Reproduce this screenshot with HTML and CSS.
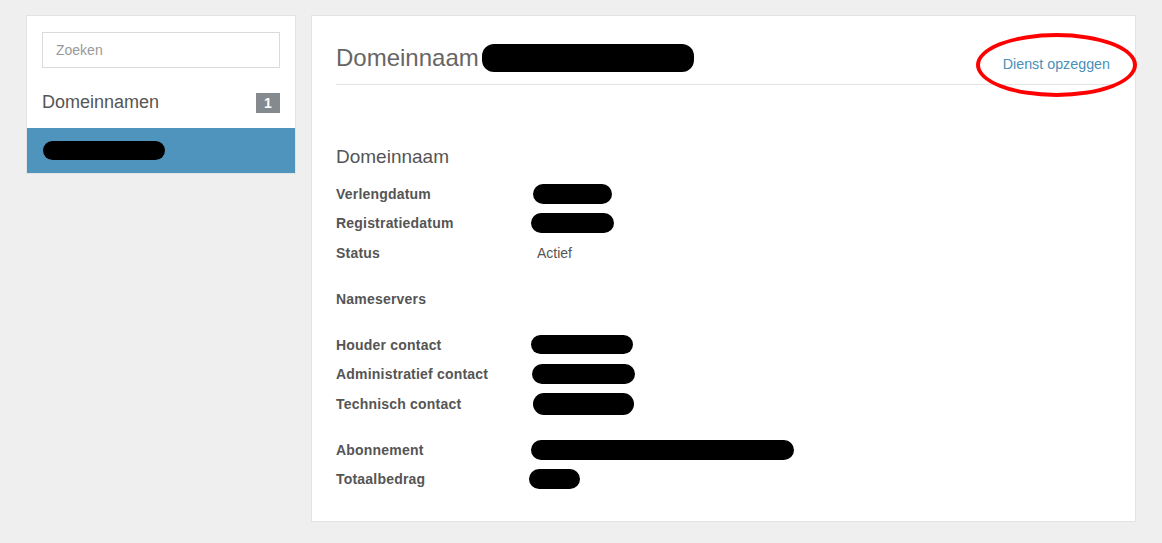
FILE: index.html
```html
<!DOCTYPE html>
<html lang="nl">
<head>
<meta charset="utf-8">
<title>Domeinnaam</title>
<link rel="stylesheet" href="styles.css">
</head>
<body>
<div class="page">
  <aside class="sidebar">
    <div class="search"><input type="text" placeholder="Zoeken"></div>
    <div class="cat">
      <span class="cat-name">Domeinnamen</span>
      <span class="badge">1</span>
    </div>
    <div class="item active"><span class="redact" style="width:122px;height:19px"></span></div>
  </aside>
  <main class="content">
    <header class="head">
      <h1 class="title">Domeinnaam <span class="redact" style="width:212px;height:28px"></span></h1>
      <a class="cancel" href="#">Dienst opzeggen</a>
      <span class="circle"></span>
    </header>
    <h2 class="section">Domeinnaam</h2>
    <div class="group">
      <div class="row"><span class="label">Verlengdatum</span><span class="value"><span class="redact" style="width:79px;height:20px;margin-left:2px"></span></span></div>
      <div class="row"><span class="label">Registratiedatum</span><span class="value"><span class="redact" style="width:83px;height:20px"></span></span></div>
      <div class="row"><span class="label">Status</span><span class="value text">Actief</span></div>
    </div>
    <div class="group">
      <div class="row"><span class="label">Nameservers</span><span class="value"></span></div>
    </div>
    <div class="group">
      <div class="row"><span class="label">Houder contact</span><span class="value"><span class="redact" style="width:102px;height:19px"></span></span></div>
      <div class="row"><span class="label">Administratief contact</span><span class="value"><span class="redact" style="width:103px;height:20px;margin-left:1px"></span></span></div>
      <div class="row"><span class="label">Technisch contact</span><span class="value"><span class="redact" style="width:101px;height:22px;margin-left:2px"></span></span></div>
    </div>
    <div class="group">
      <div class="row"><span class="label">Abonnement</span><span class="value"><span class="redact" style="width:263px;height:20px"></span></span></div>
      <div class="row"><span class="label">Totaalbedrag</span><span class="value"><span class="redact" style="width:51px;height:20px;margin-left:-2px"></span></span></div>
    </div>
  </main>
</div>
</body>
</html>
```
FILE: styles.css
```css
* { box-sizing: border-box; }
html, body { margin: 0; padding: 0; }
body {
  background: #efefef;
  font-family: "Liberation Sans", Arial, sans-serif;
  color: #555;
  height: 543px;
  overflow: hidden;
}
.page {
  display: flex;
  align-items: flex-start;
  gap: 15px;
  padding: 15px 0 0 26px;
}
.sidebar {
  width: 270px;
  background: #fff;
  border: 1px solid #e3e3e3;
}
.search {
  padding: 16px 15px 0 15px;
}
.search input {
  display: block;
  width: 238px;
  height: 36px;
  border: 1px solid #dadada;
  padding: 0 0 0 13px;
  font-family: "Liberation Sans", Arial, sans-serif;
  font-size: 14px;
  color: #555;
  outline: none;
}
.search input::placeholder { color: #999; }
.cat {
  display: flex;
  justify-content: space-between;
  align-items: center;
  height: 60px;
  padding: 9px 15px 0 15px;
}
.cat-name {
  font-size: 18px;
  color: #555;
}
.badge {
  display: inline-flex;
  align-items: center;
  justify-content: center;
  width: 24px;
  height: 20px;
  background: #858a8f;
  color: #fff;
  font-size: 14px;
  font-weight: bold;
}
.item {
  height: 45px;
  display: flex;
  align-items: center;
  padding-left: 16px;
}
.item.active { background: #4f94bc; }
.redact {
  display: inline-block;
  background: #000;
  border-radius: 11px;
  vertical-align: middle;
}
.content {
  position: relative;
  width: 825px;
  height: 507px;
  background: #fff;
  border: 1px solid #e3e3e3;
  padding: 0 24px 0 24px;
}
.head {
  position: relative;
  display: flex;
  justify-content: space-between;
  align-items: center;
  height: 69px;
  padding-top: 16px;
  border-bottom: 1px solid #e3e3e3;
}
.title {
  margin: 0;
  font-size: 24px;
  font-weight: normal;
  color: #666;
  display: flex;
  align-items: center;
  gap: 3px;
}
.title .redact { border-radius: 12px; }
.cancel {
  font-size: 14.3px;
  color: #4a8fb8;
  text-decoration: none;
  margin-right: 1px;
  margin-top: 12px;
}
.circle {
  position: absolute;
  left: 640px;
  top: 17px;
  width: 161px;
  height: 64px;
  border: 4px solid #f00;
  border-radius: 50%;
}
.section {
  margin: 61px 0 11px 0;
  font-size: 19px;
  font-weight: normal;
  color: #555;
  line-height: 22px;
}
.group { margin-bottom: 16.5px; }
.row {
  display: flex;
  align-items: center;
  height: 29.5px;
}
.label {
  width: 195px;
  font-size: 14px;
  font-weight: bold;
  color: #555;
  letter-spacing: 0.2px;
}
.value { display: flex; align-items: center; }
.value.text {
  font-size: 14px;
  color: #555;
  padding-left: 6px;
}
```
